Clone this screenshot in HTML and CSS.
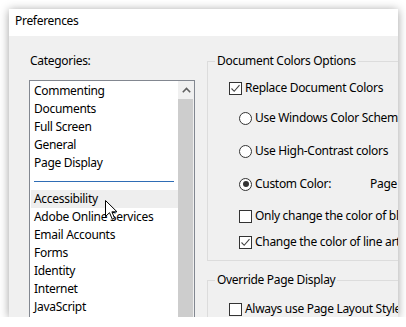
FILE: index.html
```
<!DOCTYPE html>
<html>
<head>
<meta charset="utf-8">
<link rel="stylesheet" href="styles.css">
</head>
<body>
<div class="window">
  <div class="titlebar">Preferences</div>
  <div class="content">
    <div class="left">
      <div class="cat-label">Categories:</div>
      <div class="listbox">
        <ul class="items">
          <li>Commenting</li>
          <li>Documents</li>
          <li>Full Screen</li>
          <li>General</li>
          <li>Page Display</li>
          <li class="sep"></li>
          <li class="hover">Accessibility</li>
          <li>Adobe Online Services</li>
          <li>Email Accounts</li>
          <li>Forms</li>
          <li>Identity</li>
          <li>Internet</li>
          <li>JavaScript</li>
        </ul>
        <div class="scrollbar">
          <div class="arrow"><svg width="9" height="6" viewBox="0 0 9 6"><path d="M0.8 5.2 L4.5 1.5 L8.2 5.2" fill="none" stroke="#606060" stroke-width="1.6"/></svg></div>
          <div class="thumb"></div>
        </div>
        <svg class="cursor" width="13" height="20" viewBox="0 0 13 20"><path d="M0.5 0.5 L0.5 16.5 L4.5 12.7 L7.3 19.2 L9.6 18.2 L6.9 11.8 L12 11.8 Z" fill="#fff" stroke="#000" stroke-width="1" stroke-linejoin="miter"/></svg>
      </div>
    </div>
    <div class="right">
      <fieldset class="group g1">
        <legend>Document Colors Options</legend>
        <div class="rows">
          <div class="row r1"><span class="cb"><svg width="11" height="11" viewBox="0 0 11 11"><path d="M1.5 5.5 L4.2 8.3 L9.5 2.2" fill="none" stroke="#444" stroke-width="1.1"/></svg></span><span class="txt">Replace Document Colors</span></div>
          <div class="row r2 ind"><span class="rb"></span><span class="txt">Use Windows Color Scheme</span></div>
          <div class="row r3 ind"><span class="rb"></span><span class="txt">Use High-Contrast colors</span></div>
          <div class="row r4 ind"><span class="rb on"></span><span class="txt cc">Custom Color:</span><span class="txt">Page Background</span></div>
          <div class="row r5 ind"><span class="cb"></span><span class="txt">Only change the color of black text or line art</span></div>
          <div class="row r6 ind"><span class="cb"><svg width="11" height="11" viewBox="0 0 11 11"><path d="M1.5 5.5 L4.2 8.3 L9.5 2.2" fill="none" stroke="#444" stroke-width="1.1"/></svg></span><span class="txt">Change the color of line art as well as text</span></div>
        </div>
      </fieldset>
      <fieldset class="group g2">
        <legend>Override Page Display</legend>
        <div class="rows">
          <div class="row r7"><span class="cb"></span><span class="txt">Always use Page Layout Style</span></div>
        </div>
      </fieldset>
    </div>
  </div>
</div>
</body>
</html>
```
FILE: styles.css
```
html, body {
  margin: 0;
  background: #ffffff;
}
body {
  padding: 9px 0 0 9px;
  font-family: "Noto Sans", "Open Sans", sans-serif;
  font-size: 12px;
  letter-spacing: -0.3px;
  color: #000;
}
.window {
  width: 389px;
  height: 308px;
  overflow: hidden;
  background: #f0f0f0;
  box-shadow: 0 1px 9px rgba(0, 0, 0, 0.38);
  display: flex;
  flex-direction: column;
}
.titlebar {
  height: 27px;
  box-sizing: border-box;
  background: #ffffff;
  padding: 4px 0 0 6px;
  line-height: 16px;
  flex: none;
}
.content {
  flex: 1;
  display: flex;
  min-height: 0;
}
.left {
  padding-left: 20px;
  width: 166px;
  flex: none;
}
.cat-label {
  margin-top: 17px;
  line-height: 16px;
  padding-left: 1px;
}
.listbox {
  margin-top: 11px;
  height: 260px;
  border: 1px solid #828790;
  background: #fff;
  display: flex;
  position: relative;
}
.items {
  list-style: none;
  margin: 0;
  padding: 1px 0 0 1px;
  flex: 1;
}
.items li {
  height: 18px;
  line-height: 18px;
  padding-left: 3px;
  white-space: nowrap;
}
.items li.sep {
  height: 18px;
  display: flex;
  align-items: center;
  padding: 0 4px 0 3px;
}
.items li.sep::before {
  content: "";
  display: block;
  height: 1px;
  flex: 1;
  background: #2f6db5;
}
.items li.hover {
  background: #eeeeee;
}
.scrollbar {
  width: 16px;
  flex: none;
  background: #f0f0f0;
  display: flex;
  flex-direction: column;
}
.arrow {
  height: 17px;
  display: flex;
  align-items: center;
  justify-content: center;
}
.thumb {
  flex: 1;
  background: #cdcdcd;
  margin: 1px 1px 0 0;
}
.cursor {
  position: absolute;
  left: 75px;
  top: 119px;
}
.right {
  margin-left: 12px;
  flex: none;
  width: 260px;
}
.group {
  margin: 0;
  padding: 0;
  border: 1px solid #dcdcdc;
  width: 240px;
  min-width: 0;
}
.group legend {
  margin-left: 7px;
  padding: 0 2px;
  line-height: 16px;
}
.rows {
  padding: 0 0 10px 21px;
}
.g1 {
  margin-top: 17px;
}
.g2 {
  margin-top: 11px;
}
.g2 .rows {
  padding-bottom: 20px;
}
.row {
  display: flex;
  align-items: center;
  height: 16px;
  white-space: nowrap;
}
.r1 { margin-top: 11px; }
.r2 { margin-top: 14px; }
.r3 { margin-top: 17px; }
.r4 { margin-top: 17px; }
.r5 { margin-top: 16px; }
.r6 { margin-top: 10px; }
.r7 { margin-top: 13px; }
.ind {
  margin-left: 10px;
}
.cb {
  width: 13px;
  height: 13px;
  box-sizing: border-box;
  border: 1px solid #333;
  background: #fff;
  flex: none;
  display: flex;
  align-items: center;
  justify-content: center;
}
.rb {
  width: 13px;
  height: 13px;
  box-sizing: border-box;
  border: 1px solid #333;
  border-radius: 50%;
  background: #fff;
  flex: none;
  display: flex;
  align-items: center;
  justify-content: center;
}
.rb.on::after {
  content: "";
  width: 6px;
  height: 6px;
  border-radius: 50%;
  background: #333;
}
.txt {
  margin-left: 3px;
  line-height: 16px;
}
.txt.cc {
  width: 112px;
  flex: none;
}
```
